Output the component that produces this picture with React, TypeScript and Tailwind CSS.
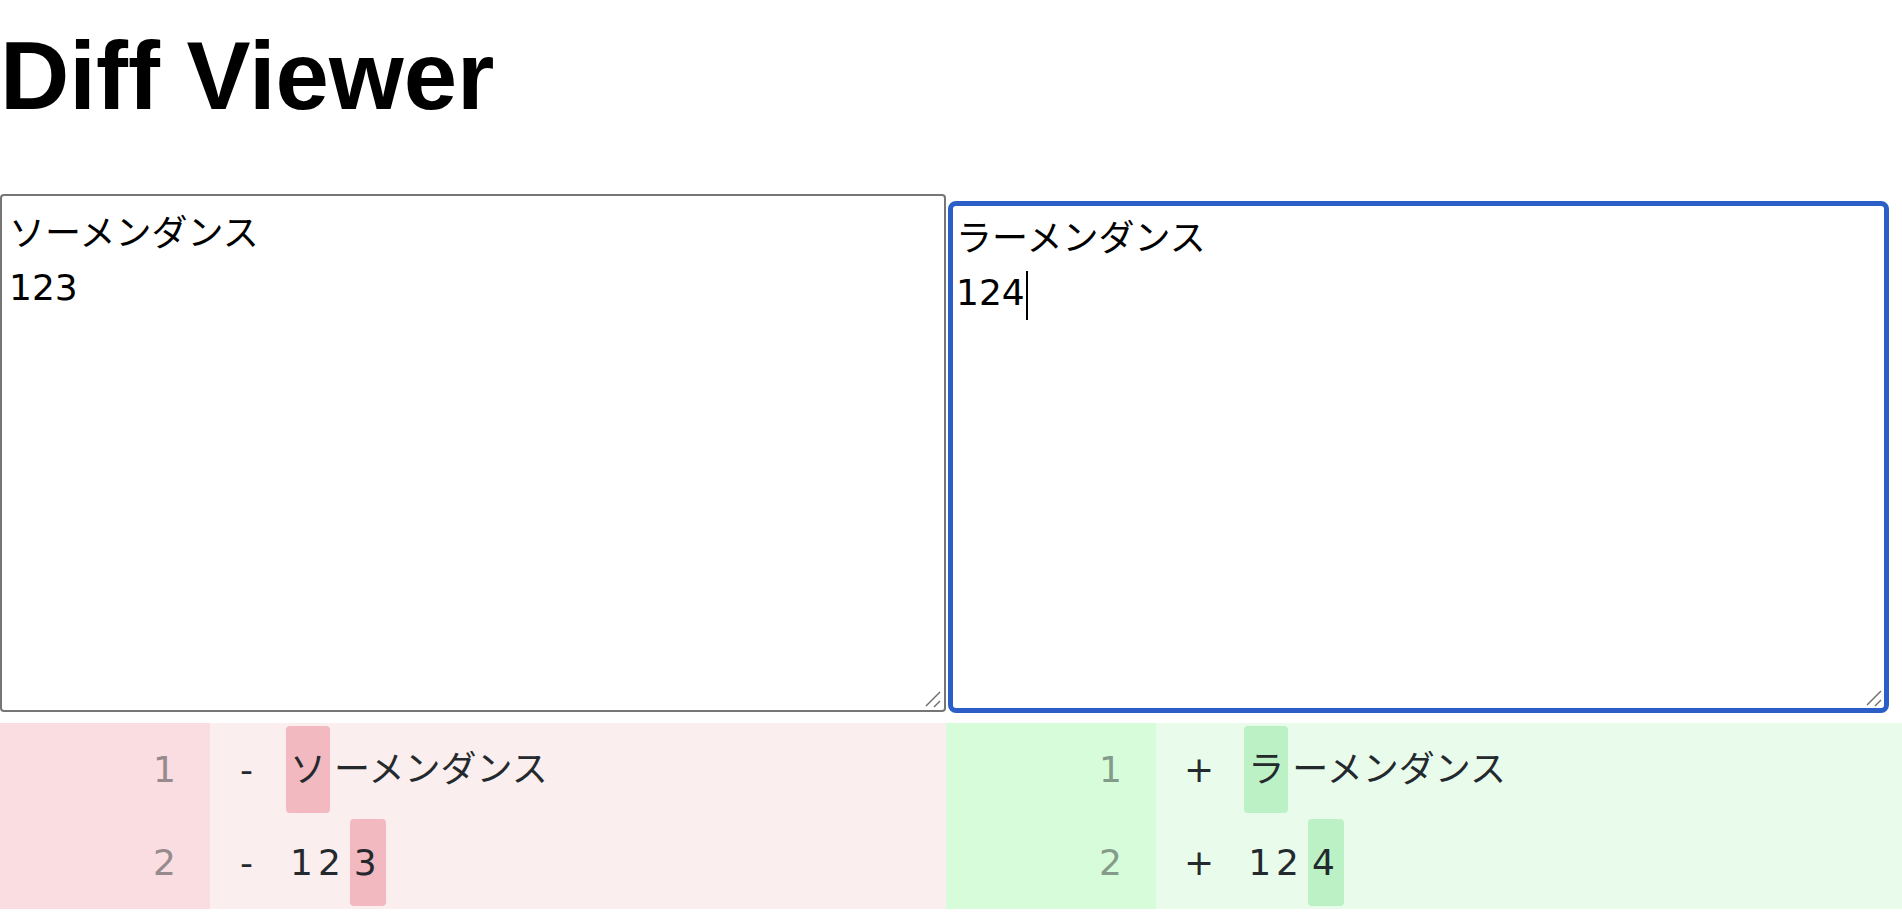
import React from 'react';

const oldText = 'ソーメンダンス\n123';
const newText = 'ラーメンダンス\n124';

type Part = { text: string; changed?: boolean; digits?: boolean };
type Row = { num: number; parts: Part[] };

const removedRows: Row[] = [
  { num: 1, parts: [{ text: 'ソ', changed: true }, { text: 'ーメンダンス' }] },
  { num: 2, parts: [{ text: '12', digits: true }, { text: '3', changed: true, digits: true }] },
];

const addedRows: Row[] = [
  { num: 1, parts: [{ text: 'ラ', changed: true }, { text: 'ーメンダンス' }] },
  { num: 2, parts: [{ text: '12', digits: true }, { text: '4', changed: true, digits: true }] },
];

function Grip({ className }: { className: string }) {
  return (
    <svg className={`pointer-events-none absolute ${className}`} width="20" height="20" viewBox="0 0 20 20">
      <path d="M2 16L16 2" stroke="#6e6e6e" strokeWidth="1.4" />
      <path d="M10 17L16 11" stroke="#6e6e6e" strokeWidth="1.4" />
    </svg>
  );
}

function DiffPane({ rows, kind }: { rows: Row[]; kind: 'removed' | 'added' }) {
  const removed = kind === 'removed';
  return (
    <div className={removed ? 'w-[946px] shrink-0 bg-[#fbeeef]' : 'flex-1 bg-[#e9fcec]'}>
      {rows.map((row) => (
        <div key={row.num} className="flex h-[93px] items-center">
          <div
            className={
              removed
                ? 'flex h-full w-[210px] shrink-0 items-center justify-end bg-[#f9dde0] pr-[34px] text-[#968a8c]'
                : 'flex h-full w-[210px] shrink-0 items-center justify-end bg-[#d6fcd9] pr-[34px] text-[#859b89]'
            }
          >
            {row.num}
          </div>
          <div className={removed ? 'pl-[30px] pr-[33px]' : 'pl-[28px] pr-[30px]'}>{removed ? '-' : '+'}</div>
          <div className="flex items-center">
            {row.parts.map((p, i) => {
              const bg = p.changed ? (removed ? 'bg-[#f3b9c0]' : 'bg-[#bbf1c4]') : '';
              return (
                <span
                  key={i}
                  className={`inline-flex h-[87px] items-center rounded-[4px] px-[4px] ${bg} ${p.digits ? 'tracking-[5px]' : ''}`}
                >
                  {p.text}
                </span>
              );
            })}
          </div>
        </div>
      ))}
    </div>
  );
}

export default function App() {
  return (
    <div className="min-h-screen overflow-hidden bg-white text-black">
      <h1 className="mb-[63px] mt-[21px] font-['Liberation_Sans',Arial,sans-serif] text-[96px] font-bold leading-[110px]">
        Diff Viewer
      </h1>

      <div className="flex items-start font-['DejaVu_Sans','Noto_Sans_CJK_JP',sans-serif] text-[36px] leading-[54px]">
        <div className="relative h-[518px] w-[946px] shrink-0">
          <textarea
            className="h-full w-full resize-none rounded-[4px] border-2 border-[#767676] bg-white pl-[7px] pt-[11px] text-black outline-none"
            defaultValue={oldText}
            spellCheck={false}
          />
          <Grip className="bottom-[2px] right-[2px]" />
        </div>
        <div className="relative ml-[2px] mt-[7px] h-[512px] w-[941px] shrink-0">
          <textarea
            className="h-full w-full resize-none rounded-[8px] border-[5px] border-[#2b5fc7] bg-white pl-[3px] pt-[6px] text-black outline-none"
            defaultValue={newText}
            spellCheck={false}
          />
          <div className="pointer-events-none absolute left-[78px] top-[70px] h-[49px] w-[1.5px] bg-black" />
          <Grip className="bottom-[4px] right-[4px]" />
        </div>
      </div>

      <div className="mt-[10px] flex font-['DejaVu_Sans','Noto_Sans_CJK_JP',sans-serif] text-[36px] text-[#24292e]">
        <DiffPane rows={removedRows} kind="removed" />
        <DiffPane rows={addedRows} kind="added" />
      </div>
    </div>
  );
}
